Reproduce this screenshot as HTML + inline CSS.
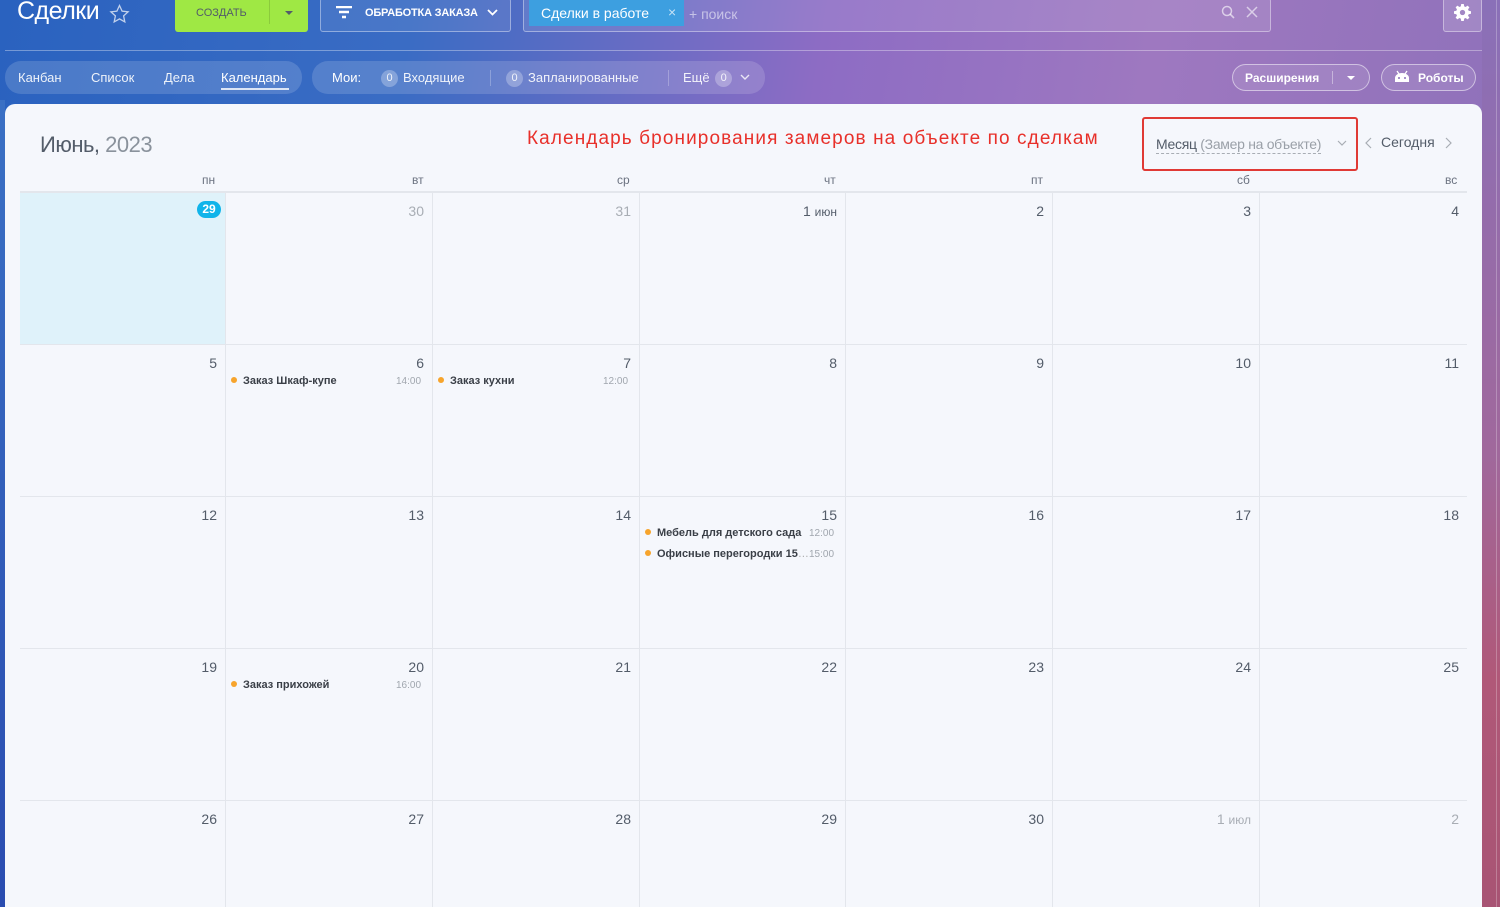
<!DOCTYPE html>
<html><head><meta charset="utf-8"><style>
*{margin:0;padding:0;box-sizing:border-box}
html,body{width:1500px;height:907px;overflow:hidden}
body{font-family:"Liberation Sans","Noto Sans CJK SC",sans-serif}
#root{position:relative;width:1500px;height:907px;overflow:hidden;background:linear-gradient(100deg,#2a62bf 0%,#3a6cc4 25%,#8d6cc4 50%,#9e78c0 70%,#8a6fb8 100%)}
.a{position:absolute}
.w{color:#fff}
.rstrip{position:absolute;left:1482px;top:0;width:18px;height:907px;background:linear-gradient(180deg,#8a70b8 0%,#a0689c 50%,#b05878 75%,#a85474 100%)}
.lstrip{position:absolute;left:0;top:100px;width:5px;height:807px;background:linear-gradient(180deg,#3a70c4,#2a4cb0)}
.panel{position:absolute;left:5px;top:104px;width:1477px;height:820px;background:#f5f7fc;border-radius:10px}
.cell{position:absolute;border-right:1px solid #e3e6ec;border-bottom:1px solid #e3e6ec}
.num{position:absolute;right:8px;top:10px;font-size:14px;color:#535c69}
.g{color:#a8adb4}
.ev{position:absolute;left:5px;font-size:11px;font-weight:bold;color:#3a3f47;white-space:nowrap}
.ev:before{content:"";display:inline-block;width:6px;height:6px;border-radius:50%;background:#f7a42c;margin-right:6px;vertical-align:1px}
.tm{position:absolute;font-size:10px;color:#a0a6ae}
.dh{position:absolute;top:173px;font-size:12px;color:#6b7280}
.pill{position:absolute;border-radius:16px;background:rgba(255,255,255,.15)}
.cnt{display:inline-block;width:17px;height:17px;border-radius:50%;background:rgba(255,255,255,.3);font-size:11px;text-align:center;line-height:17px;margin-right:5px;vertical-align:1px}
</style></head><body><div id="root">
<div class="lstrip"></div><div class="rstrip"></div>
<div class="a" style="left:1496px;top:0;width:1px;height:907px;background:rgba(255,255,255,.25)"></div>
<div class="a w" style="left:17px;top:-3px;font-size:25px;font-weight:300;letter-spacing:-.5px">Сделки</div>
<svg class="a" style="left:109px;top:4px" width="21" height="20"><path d="M10.5 1.5l2.6 5.6 6 .7-4.5 4.1 1.2 6-5.3-3-5.3 3 1.2-6L1.9 7.8l6-.7z" fill="none" stroke="rgba(255,255,255,.7)" stroke-width="1.3"/></svg>
<div class="a" style="left:175px;top:0;width:133px;height:32px;background:#9fe844;border-radius:0 0 3px 3px"></div>
<div class="a" style="left:196px;top:7px;font-size:11px;color:#535c69">СОЗДАТЬ</div>
<div class="a" style="left:269px;top:0;width:1px;height:24px;background:rgba(0,0,0,.12)"></div>
<div class="a" style="left:285px;top:11px;width:0;height:0;border-left:4px solid transparent;border-right:4px solid transparent;border-top:4px solid #535c69"></div>
<div class="a" style="left:320px;top:-2px;width:191px;height:34px;border:1px solid rgba(255,255,255,.4);border-radius:3px;background:rgba(255,255,255,.08)"></div>
<svg class="a" style="left:336px;top:6px" width="16" height="14"><path d="M0 1h16M3 6h10M6 11h4" stroke="#fff" stroke-width="2.5"/></svg>
<div class="a w" style="left:365px;top:7px;font-size:11px;font-weight:bold;letter-spacing:-.2px">ОБРАБОТКА ЗАКАЗА</div>
<svg class="a" style="left:487px;top:9px" width="11" height="8"><path d="M1 1l4.5 4.5L10 1" stroke="#fff" stroke-width="1.8" fill="none"/></svg>
<div class="a" style="left:523px;top:-2px;width:748px;height:34px;border:1px solid rgba(255,255,255,.4);border-radius:3px;background:rgba(255,255,255,.1)"></div>
<div class="a" style="left:529px;top:0;width:155px;height:26px;background:#3d9fe0"></div>
<div class="a w" style="left:541px;top:5px;font-size:14px">Сделки в работе</div>
<div class="a" style="left:668px;top:4px;font-size:14px;color:rgba(255,255,255,.7)">×</div>
<div class="a" style="left:689px;top:6px;font-size:14px;color:rgba(255,255,255,.55)">+ поиск</div>
<svg class="a" style="left:1221px;top:5px" width="14" height="14"><circle cx="6" cy="6" r="4.5" stroke="rgba(255,255,255,.6)" stroke-width="1.5" fill="none"/><path d="M9 9l4 4" stroke="rgba(255,255,255,.6)" stroke-width="1.6"/></svg>
<svg class="a" style="left:1246px;top:6px" width="12" height="12"><path d="M1 1l10 10M11 1L1 11" stroke="rgba(255,255,255,.6)" stroke-width="1.5"/></svg>
<div class="a" style="left:1443px;top:-2px;width:39px;height:34px;border:1px solid rgba(255,255,255,.4);border-radius:3px;background:rgba(255,255,255,.15)"></div>
<svg class="a" style="left:1454px;top:4px" width="17" height="17" viewBox="0 0 16 16"><path fill="#fff" d="M6.8 0h2.4l.4 2.2 1.3.6 1.9-1.3 1.7 1.7-1.3 1.9.6 1.3 2.2.4v2.4l-2.2.4-.6 1.3 1.3 1.9-1.7 1.7-1.9-1.300-1.3.6-.4 2.2H6.8l-.4-2.2-1.3-.6-1.9 1.3-1.7-1.7 1.3-1.9-.6-1.3L0 9.2V6.8l2.2-.4.6-1.3-1.3-1.9 1.7-1.7 1.9 1.3 1.3-.6zM8 5.5a2.5 2.5 0 100 5 2.5 2.5 0 000-5z"/></svg>
<div class="a" style="left:5px;top:50px;width:1477px;height:1px;background:rgba(255,255,255,.35)"></div>
<div class="pill" style="left:5px;top:61px;width:297px;height:33px"></div>
<div class="a w" style="left:18px;top:70px;font-size:13px;opacity:.9">Канбан</div>
<div class="a w" style="left:91px;top:70px;font-size:13px;opacity:.9">Список</div>
<div class="a w" style="left:164px;top:70px;font-size:13px;opacity:.9">Дела</div>
<div class="a w" style="left:221px;top:70px;font-size:13px">Календарь</div>
<div class="a" style="left:221px;top:88px;width:68px;height:2px;background:rgba(255,255,255,.8)"></div>
<div class="pill" style="left:312px;top:61px;width:453px;height:33px"></div>
<div class="a w" style="left:332px;top:70px;font-size:13px">Мои:</div>
<div class="a w" style="left:381px;top:70px;font-size:13px;opacity:.9"><span class="cnt">0</span>Входящие</div>
<div class="a" style="left:490px;top:70px;width:1px;height:16px;background:rgba(255,255,255,.25)"></div>
<div class="a w" style="left:506px;top:70px;font-size:13px;opacity:.9"><span class="cnt">0</span>Запланированные</div>
<div class="a" style="left:668px;top:70px;width:1px;height:16px;background:rgba(255,255,255,.25)"></div>
<div class="a w" style="left:683px;top:70px;font-size:13px;opacity:.9">Ещё <span class="cnt" style="margin-left:2px">0</span></div>
<svg class="a" style="left:740px;top:74px" width="10" height="7"><path d="M1 1l4 4 4-4" stroke="rgba(255,255,255,.8)" stroke-width="1.4" fill="none"/></svg>
<div class="a" style="left:1232px;top:64px;width:138px;height:27px;border:1px solid rgba(255,255,255,.5);border-radius:14px;background:rgba(255,255,255,.1)"></div>
<div class="a w" style="left:1245px;top:71px;font-size:12px;font-weight:bold">Расширения</div>
<div class="a" style="left:1332px;top:71px;width:1px;height:13px;background:rgba(255,255,255,.4)"></div>
<div class="a" style="left:1347px;top:76px;border-left:4px solid transparent;border-right:4px solid transparent;border-top:4px solid #fff"></div>
<div class="a" style="left:1381px;top:64px;width:95px;height:27px;border:1px solid rgba(255,255,255,.5);border-radius:14px;background:rgba(255,255,255,.1)"></div>
<svg class="a" style="left:1394px;top:70px" width="16" height="14"><path d="M3 1l2 3M13 1l-2 3" stroke="#fff" stroke-width="1.3"/><path d="M1 12V8a7 5 0 0 1 14 0v4z" fill="#fff"/><circle cx="5" cy="8" r="1" fill="#8a70b8"/><circle cx="11" cy="8" r="1" fill="#8a70b8"/></svg>
<div class="a w" style="left:1418px;top:71px;font-size:12px;font-weight:bold">Роботы</div>
<div class="panel"></div>
<div class="a" style="left:40px;top:132px;font-size:22px;font-weight:300;color:#535c69;letter-spacing:-.5px">Июнь, <span style="color:#8a929c">2023</span></div>
<div class="a" style="left:527px;top:128px;font-size:19px;color:#e8302a;letter-spacing:1.1px">Календарь бронирования замеров на объекте по сделкам</div>
<div class="a" style="left:1142px;top:117px;width:216px;height:54px;border:2px solid #e03a35;border-radius:3px"></div>
<div class="a" style="left:1156px;top:135px;font-size:14px;color:#535c69;border-bottom:1px dashed #a8adb4;line-height:18px;letter-spacing:-.3px">Месяц <span style="color:#9aa0a8">(Замер на объекте)</span></div>
<svg class="a" style="left:1337px;top:140px" width="10" height="7"><path d="M1 1l4 4 4-4" stroke="#a8adb4" stroke-width="1.2" fill="none"/></svg>
<svg class="a" style="left:1365px;top:137px" width="7" height="12"><path d="M6 1L1 6l5 5" stroke="#a8adb4" stroke-width="1.2" fill="none"/></svg>
<div class="a" style="left:1381px;top:134px;font-size:14px;color:#535c69">Сегодня</div>
<svg class="a" style="left:1445px;top:137px" width="7" height="12"><path d="M1 1l5 5-5 5" stroke="#a8adb4" stroke-width="1.2" fill="none"/></svg>
<div class="dh" style="left:202px">пн</div><div class="dh" style="left:412px">вт</div><div class="dh" style="left:617px">ср</div><div class="dh" style="left:824px">чт</div><div class="dh" style="left:1031px">пт</div><div class="dh" style="left:1237px">сб</div><div class="dh" style="left:1445px">вс</div>
<div class="a" style="left:20px;top:191px;width:1447px;height:2px;background:#e3e6ec"></div>
<div class="a" style="left:20px;top:193px;width:206px;height:152px;background:#dff2fa"></div>
<div id="g"></div>
<div class="a" style="left:197px;top:201px;width:24px;height:17px;border-radius:9px;background:#10b4ea;color:#fff;font-size:12px;font-weight:bold;text-align:center;line-height:17px">29</div>
</div>
<script>
var X=[20,226,433,640,846,1053,1260,1467],Y=[193,345,497,649,801,953];
var d=[["",30,31,"1 <span style='font-size:12px'>июн</span>",2,3,4],[5,6,7,8,9,10,11],[12,13,14,15,16,17,18],[19,20,21,22,23,24,25],[26,27,28,29,30,"1 <span style='font-size:12px'>июл</span>",2]];
var h="";
for(var r=0;r<5;r++)for(var c=0;c<7;c++){
var gr=(r==0&&(c==1||c==2))||(r==4&&c>=5);
h+='<div class="cell" style="left:'+X[c]+'px;top:'+Y[r]+'px;width:'+(X[c+1]-X[c])+'px;height:'+(r==4?106:152)+'px;'+(c==6?'border-right:none;':'')+(r==4?'border-bottom:none;':'')+'"><div class="num'+(gr?' g':'')+'">'+d[r][c]+'</div></div>';}
function ev(c,y,t,tm){h+='<div class="ev" style="left:'+(X[c]+5)+'px;top:'+y+'px">'+t+'</div><div class="tm" style="left:'+(X[c+1]-37)+'px;top:'+(y+1)+'px">'+tm+'</div>';}
ev(1,375,"Заказ Шкаф-купе","14:00");ev(2,375,"Заказ кухни","12:00");
ev(3,527,"Мебель для детского сада","12:00");ev(3,548,"Офисные перегородки 15<span style='font-weight:normal;color:#aaa'>…</span>","15:00");
ev(1,679,"Заказ прихожей","16:00");
document.getElementById("g").innerHTML=h;
</script>
</body></html>
